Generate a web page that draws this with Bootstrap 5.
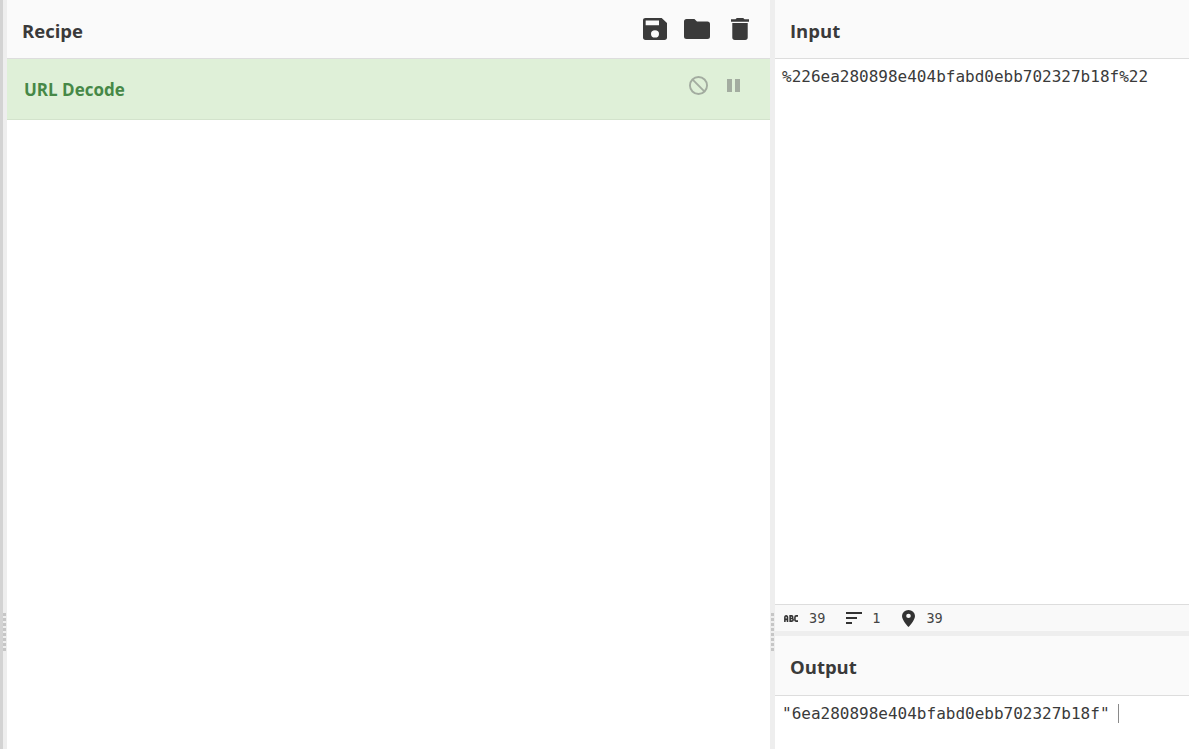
<!DOCTYPE html>
<html lang="en">
<head>
<meta charset="utf-8">
<title>Recipe</title>
<link href="https://cdn.jsdelivr.net/npm/bootstrap@5.3.0/dist/css/bootstrap.min.css" rel="stylesheet">
<style>
html,body{height:100%;overflow:hidden;background:#fff}
.app-shell{height:749px;width:1189px}
.edge-bar{width:7px;background:#eeeeee;border-left:3px solid #d3d3d3;position:relative;flex:none}
.gutter-v{width:5px;background:#eeeeee;position:relative;flex:none}
.grip{position:absolute;width:3px;height:39px;left:0;top:613px;background-image:repeating-linear-gradient(to bottom,#c6c6c6 0 3px,transparent 3px 5px)}
.gutter-v .grip{left:1px}
.recipe-col{width:763px;flex:none}
.pane-head{height:59px;background:#fafafa;border-bottom:1px solid #dddddd;color:#3a3a3a;font:700 18.5px "Open Sans",sans-serif;flex:none;padding-top:2px}
.head-recipe{padding-right:21px;padding-left:15px}
.head-io{padding-left:15px}
.head-out{height:60px}
.op-row{height:61px;background:#dff0d8;border-bottom:1px solid #d3e3cc;padding:0 30px 0 17px;color:#468847;font:700 17px "Open Sans",sans-serif}
.op-tools{gap:19px;margin-top:-7px}
.head-tools{gap:17px;margin-top:-2px}
.head-tools svg:last-child{margin-left:4px}
.mono-text{font:16px/1 "DejaVu Sans Mono",monospace;color:#3a3a3a;padding:10px 0 0 7px}
.input-body{height:545px}
.status-strip{height:27px;background:#f9f9f9;border-top:1px solid #dddddd;font:13.5px "DejaVu Sans Mono",monospace;color:#444;padding-left:8px}
.stat-item{gap:10px;margin-right:21px}
.stat-pin{gap:11px;margin-left:1px}
.gutter-h{height:5px;background:#eeeeee;flex:none}
.caret-mark{display:inline-block;width:1px;height:19px;background:#8a8a8a;margin-left:8px;vertical-align:-4px}
.out-text{padding-top:8px}
</style>
</head>
<body>
<div class="app-shell d-flex">
  <div class="edge-bar"><div class="grip"></div></div>
  <div class="recipe-col d-flex flex-column">
    <div class="pane-head head-recipe d-flex align-items-center justify-content-between">
      <span>Recipe</span>
      <div class="head-tools d-flex align-items-center">
        <svg width="24" height="22" viewBox="3 3 18 18" preserveAspectRatio="none" fill="#3a3a3a"><path d="M15 9H5V5h10m-3 14a3 3 0 1 1 0-6 3 3 0 0 1 0 6M17 3H5a2 2 0 0 0-2 2v14a2 2 0 0 0 2 2h14a2 2 0 0 0 2-2V7z"/></svg>
        <svg width="26" height="20" viewBox="2 4 20 16" preserveAspectRatio="none" fill="#3a3a3a"><path d="M10 4H4a2 2 0 0 0-2 2v12a2 2 0 0 0 2 2h16a2 2 0 0 0 2-2V8a2 2 0 0 0-2-2h-8z"/></svg>
        <svg width="18" height="22" viewBox="5 3 14 18" preserveAspectRatio="none" fill="#3a3a3a"><path d="M6 19a2 2 0 0 0 2 2h8a2 2 0 0 0 2-2V7H6zM19 4h-3.500l-1-1h-5l-1 1H5v2h14z"/></svg>
      </div>
    </div>
    <div class="op-row d-flex align-items-center justify-content-between">
      <span>URL Decode</span>
      <div class="op-tools d-flex align-items-center">
        <svg width="19" height="19" viewBox="0 0 20 20" fill="none" stroke="#a3aca0" stroke-width="2"><circle cx="10" cy="10" r="9"/><path d="M3.600 3.600l12.800 12.800"/></svg>
        <svg width="13" height="13" viewBox="0 0 13 13" fill="#a3aca0"><path d="M0 0h5v13H0zM8 0h5v13H8z"/></svg>
      </div>
    </div>
  </div>
  <div class="gutter-v"><div class="grip"></div></div>
  <div class="flex-grow-1 d-flex flex-column">
    <div class="pane-head head-io d-flex align-items-center"><span>Input</span></div>
    <div class="input-body mono-text">%226ea280898e404bfabd0ebb702327b18f%22</div>
    <div class="status-strip d-flex align-items-center">
      <div class="stat-item d-flex align-items-center">
        <svg width="16" height="7" viewBox="0 0 16 8" fill="none" stroke="#333" stroke-width="1.800"><path d="M1 8V2.500Q1 1 2.500 1T4 2.500V8M1 5h3M7 1v6h2q1.500 0 1.500-1.500T9 4H7h2q1-.2 1-1.500T9 1zM16 1h-2q-1.500 0-1.500 1.500v3Q12.500 7 14 7h2"/></svg>
        <span>39</span>
      </div>
      <div class="stat-item d-flex align-items-center">
        <svg width="16" height="12" viewBox="0 0 16 12" fill="#333"><path d="M0 0h16v2H0zM0 5h11v2H0zM0 10h6v2H0z"/></svg>
        <span>1</span>
      </div>
      <div class="stat-item stat-pin d-flex align-items-center">
        <svg width="13" height="17" viewBox="5 2 14 20" preserveAspectRatio="none" fill="#333"><path d="M12 2a7 7 0 0 0-7 7c0 5.200 7 13 7 13s7-7.800 7-13a7 7 0 0 0-7-7m0 9.500a2.500 2.500 0 1 1 0-5 2.500 2.500 0 0 1 0 5"/></svg>
        <span>39</span>
      </div>
    </div>
    <div class="gutter-h"></div>
    <div class="pane-head head-io head-out d-flex align-items-center"><span>Output</span></div>
    <div class="mono-text out-text flex-grow-1">"6ea280898e404bfabd0ebb702327b18f"<span class="caret-mark"></span></div>
  </div>
</div>
<script src="https://cdn.jsdelivr.net/npm/bootstrap@5.3.0/dist/js/bootstrap.bundle.min.js"></script>
</body>
</html>
